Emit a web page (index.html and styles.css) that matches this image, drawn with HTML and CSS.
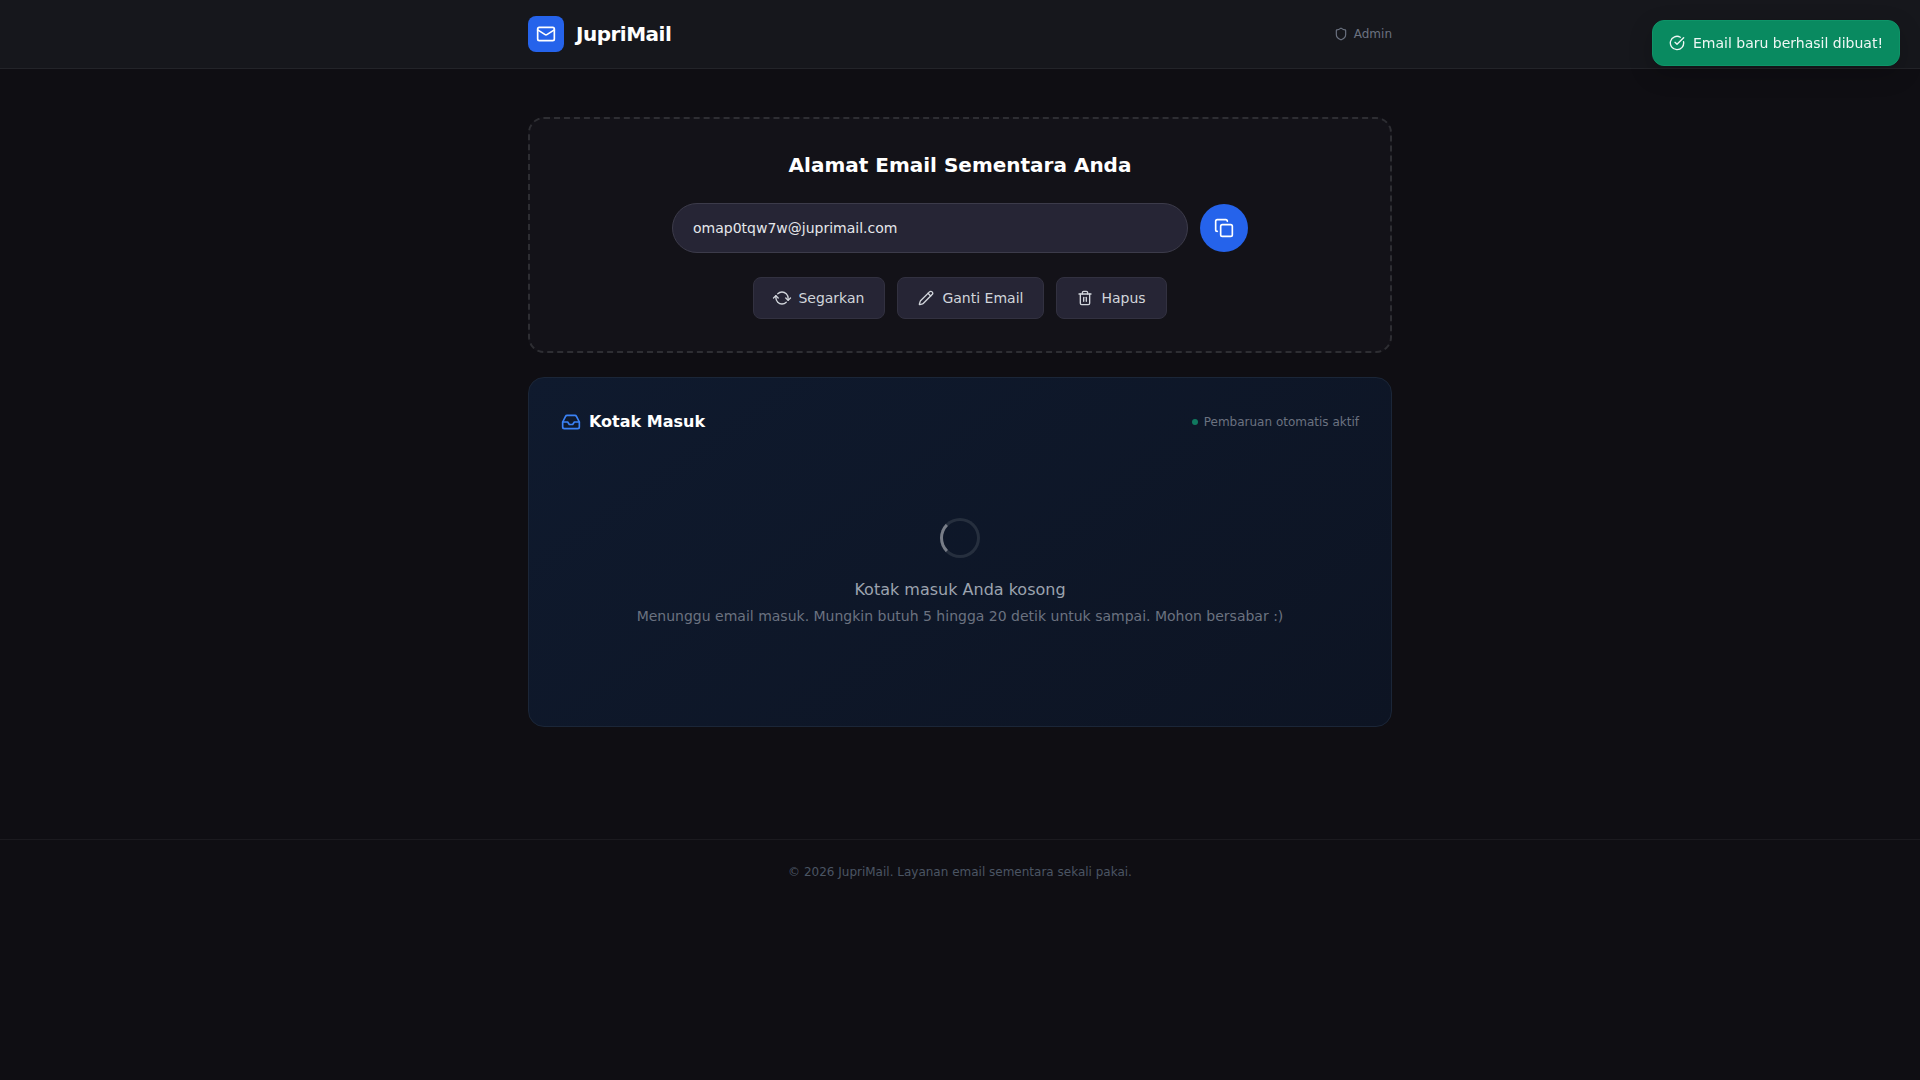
FILE: index.html
```html
<!DOCTYPE html>
<html lang="id">
<head>
<meta charset="utf-8">
<meta name="viewport" content="width=device-width, initial-scale=1">
<title>JupriMail</title>
<link rel="stylesheet" href="styles.css">
</head>
<body>
<header class="site-header">
  <div class="container header-row">
    <div class="brand">
      <span class="brand-mark">
        <svg class="icon icon-lg" viewBox="0 0 24 24" aria-hidden="true"><rect width="20" height="16" x="2" y="4" rx="2"/><path d="m22 7-8.97 5.7a1.94 1.94 0 0 1-2.06 0L2 7"/></svg>
      </span>
      <span class="brand-name">JupriMail</span>
    </div>
    <a class="admin-link" href="#admin">
      <svg class="icon icon-sm" viewBox="0 0 24 24" aria-hidden="true"><path d="M20 13c0 5-3.5 7.5-7.66 8.95a1 1 0 0 1-.67-.01C7.5 20.5 4 18 4 13V6a1 1 0 0 1 1-1c2 0 4.5-1.2 6.24-2.72a1.17 1.17 0 0 1 1.52 0C14.51 3.81 17 5 19 5a1 1 0 0 1 1 1z"/></svg>
      Admin
    </a>
  </div>
</header>

<main class="container main">
  <section class="address-card">
    <h1 class="address-title"><label for="address">Alamat Email Sementara Anda</label></h1>
    <div class="address-row">
      <input class="address-input" id="address" type="text" value="omap0tqw7w@juprimail.com" readonly>
      <button class="copy-button" type="button" aria-label="Salin">
        <svg class="icon icon-lg" viewBox="0 0 24 24" aria-hidden="true"><rect width="14" height="14" x="8" y="8" rx="2"/><path d="M4 16c-1.1 0-2-.9-2-2V4c0-1.1.9-2 2-2h10c1.1 0 2 .9 2 2"/></svg>
      </button>
    </div>
    <div class="actions">
      <button class="action" type="button">
        <svg class="icon icon-turning" viewBox="0 0 24 24" aria-hidden="true"><path d="M3 12a9 9 0 0 1 9-9 9.75 9.75 0 0 1 6.74 2.74L21 8"/><path d="M21 3v5h-5"/><path d="M21 12a9 9 0 0 1-9 9 9.75 9.75 0 0 1-6.74-2.74L3 16"/><path d="M8 16H3v5"/></svg>
        Segarkan
      </button>
      <button class="action" type="button">
        <svg class="icon" viewBox="0 0 24 24" aria-hidden="true"><path d="M21.174 6.812a1 1 0 0 0-3.986-3.987L3.842 16.174a2 2 0 0 0-.5.83l-1.321 4.352a.5.5 0 0 0 .623.622l4.353-1.32a2 2 0 0 0 .83-.497z"/><path d="m15 5 4 4"/></svg>
        Ganti Email
      </button>
      <button class="action" type="button">
        <svg class="icon" viewBox="0 0 24 24" aria-hidden="true"><path d="M3 6h18"/><path d="M19 6v14c0 1-1 2-2 2H7c-1 0-2-1-2-2V6"/><path d="M8 6V4c0-1 1-2 2-2h4c1 0 2 1 2 2v2"/><path d="M10 11v6"/><path d="M14 11v6"/></svg>
        Hapus
      </button>
    </div>
  </section>

  <section class="inbox-card">
    <div class="inbox-head">
      <h2 class="inbox-title">
        <svg class="icon icon-lg inbox-icon" viewBox="0 0 24 24" aria-hidden="true"><path d="M22 12h-6l-2 3h-4l-2-3H2"/><path d="M5.45 5.11 2 12v6a2 2 0 0 0 2 2h16a2 2 0 0 0 2-2v-6l-3.45-6.89A2 2 0 0 0 16.76 4H7.24a2 2 0 0 0-1.79 1.11z"/></svg>
        Kotak Masuk
      </h2>
      <p class="live"><span class="live-dot"></span>Pembaruan otomatis aktif</p>
    </div>
    <div class="empty">
      <span class="spinner"></span>
      <p class="empty-title">Kotak masuk Anda kosong</p>
      <p class="empty-text">Menunggu email masuk. Mungkin butuh 5 hingga 20 detik untuk sampai. Mohon bersabar :)</p>
    </div>
  </section>
</main>

<footer class="site-footer">
  <p>© 2026 JupriMail. Layanan email sementara sekali pakai.</p>
</footer>

<div class="toast" role="status">
  <svg class="icon" viewBox="0 0 24 24" aria-hidden="true"><path d="M21.801 10A10 10 0 1 1 17 3.335"/><path d="m9 11 3 3L22 4"/></svg>
  Email baru berhasil dibuat!
</div>
</body>
</html>
```
FILE: styles.css
```css
*,
*::before,
*::after {
  box-sizing: border-box;
}

body {
  margin: 0;
  min-height: 100vh;
  background: #0f0e13;
  color: #fff;
  font-family: "DejaVu Sans", sans-serif;
  font-size: 14px;
  line-height: 20px;
}

h1, h2, p {
  margin: 0;
}

button, input {
  font: inherit;
}

button {
  cursor: pointer;
}

.container {
  width: 100%;
  max-width: 896px;
  margin: 0 auto;
  padding: 0 16px;
}

.icon {
  flex: none;
  width: 16px;
  height: 16px;
  fill: none;
  stroke: currentColor;
  stroke-width: 2;
  stroke-linecap: round;
  stroke-linejoin: round;
}

.icon-sm {
  width: 14px;
  height: 14px;
}

.icon-lg {
  width: 20px;
  height: 20px;
}

.icon-turning {
  overflow: visible;
  transform: rotate(45deg);
}

/* Header */

.site-header {
  padding: 16px 0;
  background: #16171c;
  border-bottom: 1px solid #232429;
}

.header-row,
.inbox-head {
  display: flex;
  align-items: center;
  justify-content: space-between;
}

.brand {
  display: flex;
  align-items: center;
  gap: 12px;
}

.brand-mark {
  display: grid;
  place-items: center;
  width: 36px;
  height: 36px;
  border-radius: 8px;
  background: #2563eb;
}

.brand-name {
  font-size: 20px;
  line-height: 28px;
  font-weight: 700;
  letter-spacing: -0.025em;
}

.admin-link {
  display: flex;
  align-items: center;
  gap: 6px;
  color: #6b7280;
  font-size: 12px;
  line-height: 16px;
  text-decoration: none;
}

/* Address card */

.main {
  padding-top: 48px;
  padding-bottom: 48px;
}

.address-card {
  display: flex;
  flex-direction: column;
  align-items: center;
  gap: 24px;
  padding: 32px;
  border: 2px dashed #2e2e33;
  border-radius: 16px;
  background: #131218;
}

.address-title {
  font-size: 20px;
  line-height: 28px;
  font-weight: 700;
}

.address-row {
  display: flex;
  align-items: center;
  gap: 12px;
  width: 100%;
  max-width: 576px;
}

.address-input {
  flex: 1;
  min-width: 0;
  height: 50px;
  padding: 0 20px;
  border: 1px solid #3c3b4a;
  border-radius: 25px;
  outline: none;
  background: #262535;
  color: #e5e7eb;
}

.copy-button {
  display: grid;
  place-items: center;
  flex: none;
  width: 48px;
  height: 48px;
  padding: 0;
  border: 0;
  border-radius: 50%;
  background: #2563eb;
  color: #fff;
}

.actions {
  display: flex;
  flex-wrap: wrap;
  justify-content: center;
  gap: 12px;
}

.action {
  display: flex;
  align-items: center;
  gap: 8px;
  padding: 10px 20px;
  border: 1px solid #323140;
  border-radius: 8px;
  background: #262535;
  color: #d1d5db;
}

/* Inbox */

.inbox-card {
  margin-top: 24px;
  padding: 32px;
  border: 1px solid #1b2638;
  border-radius: 16px;
  background: linear-gradient(145deg, #0f1a2e, #0d1423);
}

.inbox-title {
  display: flex;
  align-items: center;
  gap: 8px;
  font-size: 16px;
  line-height: 24px;
  font-weight: 700;
}

.inbox-icon {
  color: #3b82f6;
}

.live {
  display: flex;
  align-items: center;
  gap: 6px;
  color: #6b7280;
  font-size: 12px;
  line-height: 16px;
}

.live-dot {
  width: 6px;
  height: 6px;
  border-radius: 50%;
  background: #10795f;
}

.empty {
  display: flex;
  flex-direction: column;
  align-items: center;
  padding: 84px 0 68px;
  text-align: center;
}

.spinner {
  width: 40px;
  height: 40px;
  border: 3px solid #262f3e;
  border-left-color: #787d87;
  border-radius: 50%;
}

.empty-title {
  margin-top: 20px;
  color: #9ca3af;
  font-size: 16px;
  line-height: 24px;
}

.empty-text {
  margin-top: 4px;
  color: #6b7280;
}

/* Footer */

.site-footer {
  margin-top: 64px;
  padding: 24px 16px;
  border-top: 1px solid #1b1a1f;
  color: #4b5563;
  font-size: 12px;
  line-height: 16px;
  text-align: center;
}

/* Notification */

.toast {
  position: fixed;
  top: 20px;
  right: 20px;
  display: flex;
  align-items: center;
  gap: 8px;
  padding: 12px 16px;
  border: 1px solid #0e9468;
  border-radius: 12px;
  background: #098a60;
  box-shadow: 0 8px 24px rgba(0, 0, 0, 0.2);
  color: #eef7f4;
}
```
